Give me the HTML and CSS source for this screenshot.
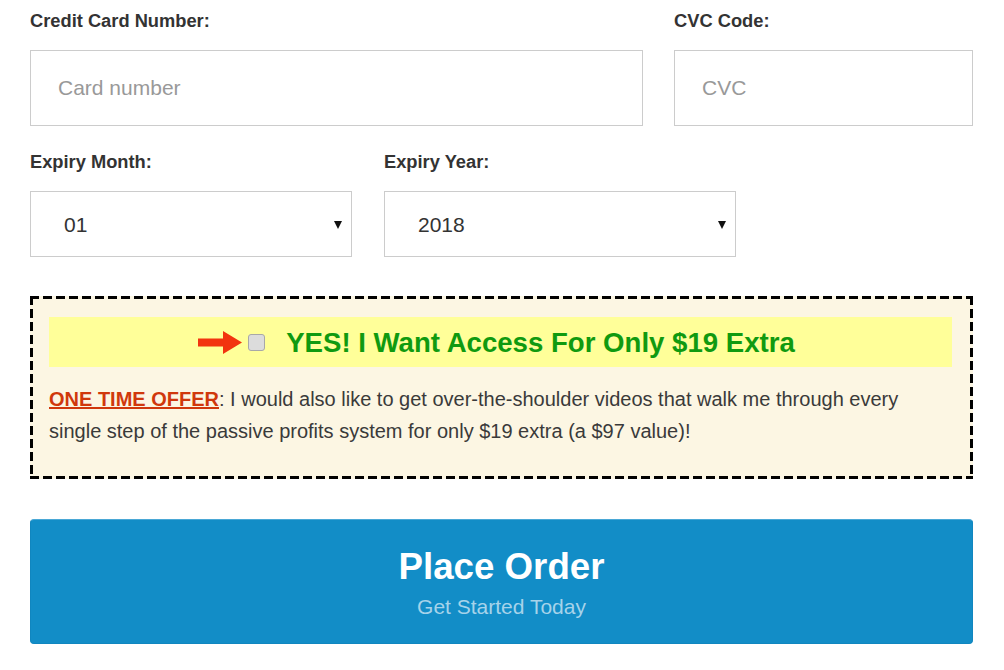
FILE: index.html
```html
<!DOCTYPE html>
<html>
<head>
<meta charset="utf-8">
<link rel="stylesheet" href="styles.css">
</head>
<body>
<div class="page">
  <div class="row row-card">
    <div class="field">
      <label class="label">Credit Card Number:</label>
      <input class="input" type="text" placeholder="Card number">
    </div>
    <div class="field">
      <label class="label">CVC Code:</label>
      <input class="input" type="text" placeholder="CVC">
    </div>
  </div>
  <div class="row row-expiry">
    <div class="field">
      <label class="label">Expiry Month:</label>
      <div class="select-wrap">
        <select class="select"><option>01</option></select>
      </div>
    </div>
    <div class="field">
      <label class="label">Expiry Year:</label>
      <div class="select-wrap">
        <select class="select"><option>2018</option></select>
      </div>
    </div>
  </div>
  <div class="offer">
    <div class="offer-bar">
      <svg class="arrow" width="44" height="23" viewBox="0 0 44 23"><path d="M0 7.5H25V0L44 11.5L25 23V15.5H0Z" fill="#f2340f"/></svg>
      <input class="check" type="checkbox">
      <span class="offer-title">YES! I Want Access For Only $19 Extra</span>
    </div>
    <p class="offer-text"><span class="oto">ONE TIME OFFER</span>: I would also like to get over-the-shoulder videos that walk me through every single step of the passive profits system for only $19 extra (a $97 value)!</p>
  </div>
  <button class="order">
    <span class="order-title">Place Order</span>
    <span class="order-sub">Get Started Today</span>
  </button>
</div>
</body>
</html>
```
FILE: styles.css
```css
* { box-sizing: border-box; }
body {
  margin: 0;
  background: #fff;
  font-family: "Liberation Sans", Arial, sans-serif;
  color: #333;
}
.page {
  padding: 10px 31px 0 30px;
}
.row {
  display: grid;
}
.row-card {
  grid-template-columns: 613px 299px;
  column-gap: 31px;
}
.row-expiry {
  grid-template-columns: 322px 352px;
  column-gap: 32px;
  margin-top: 25px;
}
.field {
  display: flex;
  flex-direction: column;
}
.label {
  font-size: 18.3px;
  line-height: 22px;
  font-weight: bold;
  color: #333;
  margin-bottom: 18px;
}
.input {
  height: 76px;
  border: 1px solid #ccc;
  padding: 0 0 0 27px;
  font-family: "Liberation Sans", Arial, sans-serif;
  font-size: 21px;
  color: #333;
  outline: none;
  border-radius: 0;
}
.input::placeholder {
  color: #999;
}
.select-wrap {
  position: relative;
}
.select {
  width: 100%;
  height: 66px;
  border: 1px solid #ccc;
  border-radius: 0;
  background: #fff;
  -webkit-appearance: none;
  appearance: none;
  padding: 0 0 0 33px;
  font-family: "Liberation Sans", Arial, sans-serif;
  font-size: 21px;
  color: #333;
  outline: none;
}
.select-wrap::after {
  content: "";
  position: absolute;
  right: 10px;
  top: 30px;
  border-left: 4px solid transparent;
  border-right: 4px solid transparent;
  border-top: 8px solid #111;
  pointer-events: none;
}
.offer {
  margin-top: 39px;
  background:
    repeating-linear-gradient(90deg, #000 0 9px, transparent 9px 13px) left top / 100% 3px no-repeat,
    repeating-linear-gradient(90deg, #000 0 9px, transparent 9px 13px) left bottom / 100% 3px no-repeat,
    repeating-linear-gradient(180deg, #000 0 9px, transparent 9px 13px) left top / 3px 100% no-repeat,
    repeating-linear-gradient(180deg, #000 0 9px, transparent 9px 13px) right top / 3px 100% no-repeat,
    #fcf6e3;
  padding: 21px 21px 21px 19px;
}
.offer-bar {
  height: 50px;
  background: #ffff99;
  display: flex;
  align-items: center;
  justify-content: center;
  padding-right: 8px;
}
.arrow {
  display: block;
  margin-top: 1px;
}
.check {
  -webkit-appearance: none;
  appearance: none;
  width: 17px;
  height: 17px;
  margin: 0 21px 0 6px;
  background: #dcdcdc;
  border: 1px solid #a8a8a8;
  border-radius: 3px;
}
.offer-title {
  font-size: 27.6px;
  font-weight: bold;
  color: #109a10;
  line-height: 32px;
  margin-top: 2px;
}
.offer-text {
  margin: 16px 0 11px;
  font-size: 20px;
  line-height: 32px;
  color: #3a3a3a;
}
.oto {
  color: #d0380c;
  font-weight: bold;
  text-decoration: underline;
}
.order {
  display: flex;
  flex-direction: column;
  align-items: center;
  width: 100%;
  margin-top: 40px;
  height: 125px;
  padding: 25px 0 0;
  background: #128dc7;
  border: 1px solid #1086bf;
  border-top-color: #4aa8d6;
  border-radius: 4px;
  font-family: "Liberation Sans", Arial, sans-serif;
  cursor: pointer;
}
.order-title {
  font-size: 36.7px;
  line-height: 44px;
  font-weight: bold;
  color: #fff;
}
.order-sub {
  margin-top: 6px;
  font-size: 21px;
  line-height: 24px;
  color: #a6d3ea;
}
```
